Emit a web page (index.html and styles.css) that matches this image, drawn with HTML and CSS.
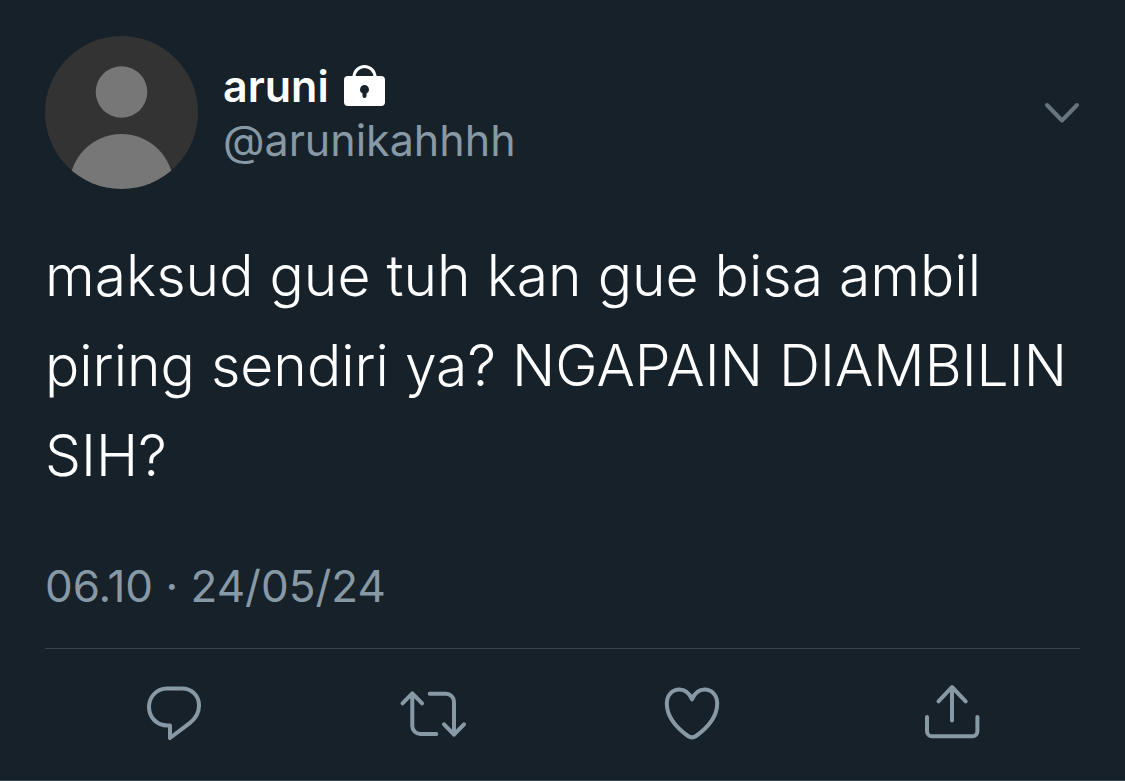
FILE: index.html
```
<!DOCTYPE html>
<html lang="id">
<head>
  <meta charset="UTF-8">
  <meta name="viewport" content="width=device-width, initial-scale=1.0">
  <title>aruni (@arunikahhhh)</title>
  <link rel="stylesheet" href="styles.css">
</head>
<body>
  <article class="tweet">
    <header class="tweet-header">
      <svg class="avatar" viewBox="0 0 153 153" role="img" aria-label="Avatar">
        <defs>
          <clipPath id="avatar-clip"><circle cx="76.5" cy="76.5" r="76.5"/></clipPath>
        </defs>
        <g clip-path="url(#avatar-clip)">
          <rect width="153" height="153" fill="#333333"/>
          <circle cx="76.5" cy="56" r="25.8" fill="#777777"/>
          <circle cx="76.5" cy="150" r="52" fill="#777777"/>
        </g>
      </svg>
      <div class="author">
        <div class="name">
          <span>aruni</span>
          <svg class="lock" viewBox="0 0 42 42" role="img" aria-label="Protected account">
            <path d="M11 14V12a10.500 10.500 0 0 1 21 0v2" fill="none" stroke="#ffffff" stroke-width="3"/>
            <rect x="1" y="11" width="41" height="30" rx="4" fill="#ffffff"/>
            <path d="M21.500 20a4.500 4.500 0 0 1 2 8.500v2.500a2 2 0 0 1-4 0v-2.500a4.500 4.500 0 0 1 2-8.500z" fill="#17212a"/>
          </svg>
        </div>
        <a class="handle" href="#">@arunikahhhh</a>
      </div>
      <button class="menu" type="button" aria-label="More">
        <svg width="36" height="24" viewBox="0 0 36 24"><path d="M3 4l15 15.500L33 4"/></svg>
      </button>
    </header>

    <p class="text">maksud gue tuh kan gue bisa ambil piring sendiri ya? NGAPAIN DIAMBILIN SIH?</p>
    <time class="date" datetime="2024-05-24T06:10">06.10 · 24/05/24</time>

    <div class="actions">
      <button type="button" aria-label="Reply">
        <svg width="64" height="64" viewBox="0 0 64 64"><path d="M28 57V44.500H25.500C14.500 44.500 7 36 7 26S14.500 7.500 25 7.500H40C50 7.500 57 15 57 24.500C57 32 53.500 37.500 48 41.800Z"/></svg>
      </button>
      <button type="button" aria-label="Retweet">
        <svg width="72" height="64" viewBox="0 0 72 64"><path d="M5.500 22.300l9.800-10 9.800 10M15.300 12.500V45a8 8 0 0 0 8 8h16M32.700 12.700H49a8 8 0 0 1 8 8v33M47 43.300l10 10.200 10-10.200"/></svg>
      </button>
      <button type="button" aria-label="Like">
        <svg width="64" height="64" viewBox="0 0 64 64"><path d="M32 18.300C29.500 12.500 25 8.500 19.500 8.500C12 8.500 6.800 14.500 6.800 22.500C6.800 36 17.500 47.500 28 55Q32 57.800 36 55C46.500 47.500 57.200 36 57.200 22.500C57.200 14.500 52 8.500 44.500 8.500C39 8.500 34.500 12.500 32 18.300Z"/></svg>
      </button>
      <button type="button" aria-label="Share">
        <svg width="64" height="64" viewBox="0 0 64 64"><path d="M19.500 20.300L33 6l13.700 14.300M33 6.500v33M8 36v14.300a5 5 0 0 0 5 5h40.400a5 5 0 0 0 5-5V36"/></svg>
      </button>
    </div>
  </article>
</body>
</html>
```
FILE: styles.css
```
* {
  box-sizing: border-box;
}
body {
  margin: 0;
  background: #17212a;
  color: #ffffff;
  font-family: Inter, "Liberation Sans", sans-serif;
}
button {
  padding: 0;
  border: none;
  background: none;
  color: #8899a6;
  cursor: pointer;
}
svg {
  display: block;
}
button svg {
  fill: none;
  stroke: currentColor;
  stroke-width: 4;
  stroke-linecap: round;
  stroke-linejoin: round;
}
.tweet {
  padding: 36px 45px 35px;
  border-bottom: 1px solid #38444d;
}
.tweet-header {
  display: flex;
  align-items: center;
  gap: 25px;
}
.avatar {
  width: 153px;
  height: 153px;
  flex: none;
}
.author {
  flex: 1;
  line-height: 54px;
}
.name {
  display: flex;
  align-items: center;
  gap: 14px;
  font-size: 43px;
  font-weight: 600;
}
.lock {
  width: 42px;
  height: 42px;
}
.handle {
  display: block;
  color: #8899a6;
  font-size: 43px;
  text-decoration: none;
}
.menu {
  color: #66757f;
}
.text {
  margin: 42px 0 58px;
  font-size: 57px;
  font-weight: 300;
  line-height: 90px;
}
.date {
  display: block;
  color: #8899a6;
  font-size: 44px;
  line-height: 54px;
}
.actions {
  display: grid;
  grid-template-columns: repeat(4, 1fr);
  justify-items: center;
  margin-top: 35px;
  padding-top: 32px;
  border-top: 1px solid #38444d;
}
```
